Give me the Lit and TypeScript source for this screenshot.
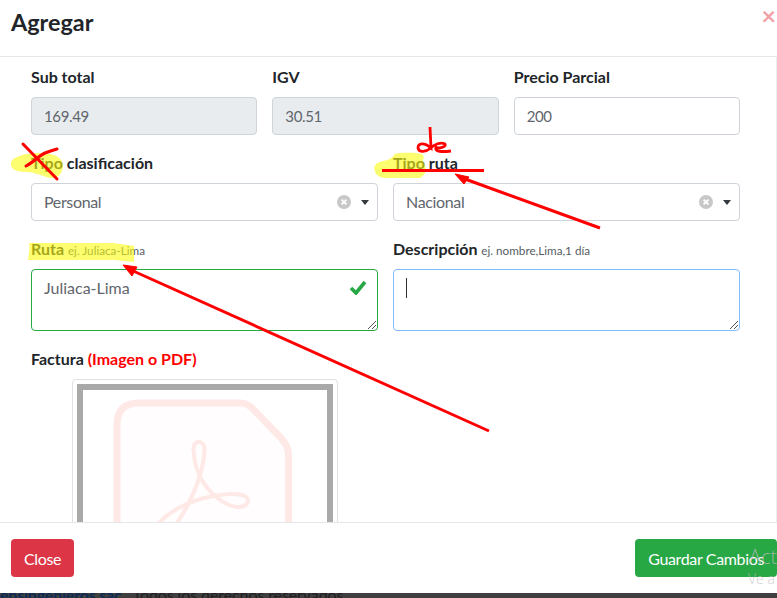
import { LitElement, html, css } from "lit";
import { customElement } from "lit/decorators.js";

@customElement("app-root")
export class AppRoot extends LitElement {
  static styles = css`
    :host { display: block; }
    * { box-sizing: border-box; }
    .page { position: relative; width: 777px; height: 598px; overflow: hidden; background: #3f3f3f; font-family: "Lato", "Noto Sans", sans-serif; font-size: 16px; color: #212529; }
    .modal { height: 593px; background: #fff; display: flex; flex-direction: column; }
    .head { height: 57px; flex: none; border-bottom: 1px solid #e4e7ea; display: flex; justify-content: space-between; padding: 8px 1px 0 11px; }
    .title { font-size: 23.4px; font-weight: 700; line-height: 29px; }
    .x { font-size: 25px; line-height: 14px; font-weight: 700; color: #f1a1a8; }
    .body { flex: 1; overflow: hidden; padding: 8px 36px 0 31px; display: flex; flex-direction: column; border-right: 1px solid #eceef0; }
    .row { display: flex; gap: 15px; margin-bottom: 16px; }
    .col { flex: 1 1 0; min-width: 0; }
    label { display: block; font-weight: 700; line-height: 24px; margin-bottom: 8px; height: 24px; flex: none; }
    small { font-weight: 400; font-size: 11.7px; color: #555c63; }
    .ctl { height: 38px; border: 1px solid #ced4da; border-radius: 4px; padding: 0 12px; display: flex; align-items: center; color: #5f666d; background: #fff; }
    .ctl.dis { background: #e9ecef; }
    .num { font-size: 15px; letter-spacing: -.35px; }
    .sel { justify-content: space-between; padding-right: 8px; letter-spacing: -.35px; }
    .sel > span:first-child { margin-top: -2px; }
    .sel-ic { display: flex; align-items: center; gap: 10px; }
    .clr { width: 14px; height: 14px; display: block; }
    .caret { width: 0; height: 0; border-left: 4px solid transparent; border-right: 4px solid transparent; border-top: 5px solid #343a40; }
    .ta { position: relative; height: 62px; border: 1px solid #ced4da; border-radius: 4px; padding: 6px 12px; color: #5f666d; line-height: 24px; }
    .ta.ok { border-color: #28a745; }
    .ta.focus { border-color: #80bdff; }
    .check { position: absolute; right: 10px; top: 10px; width: 18px; height: 15px; }
    .grip { position: absolute; right: 1px; bottom: 1px; width: 9px; height: 9px; }
    .caretline { width: 1px; height: 20px; background: #333; margin-top: 2px; }
    .red { color: #f00; }
    .thumb { flex: none; width: 266px; height: 300px; margin-left: 41px; border: 1px solid #dee2e6; border-radius: 4px; padding: 4px; }
    .frame { height: 100%; border: 6px solid #a9a9a9; }
    .pdf { display: block; width: 244px; height: 180px; }
    .foot { height: 71px; flex: none; border-top: 1px solid #e4e7ea; display: flex; justify-content: space-between; padding: 16px 0 0 11px; }
    .btn { height: 38px; border-radius: 4px; color: #fff; display: flex; align-items: center; padding: 0 13px; letter-spacing: -.35px; }
    .danger { background: #dc3545; }
    .success { background: #28a745; }
    .strip { position: absolute; left: 0; top: 593px; width: 400px; height: 5px; overflow: hidden; font-size: 16px; line-height: 18px; color: #1f1f1f; white-space: nowrap; }
    .strip span { display: block; margin-top: -7px; letter-spacing: -.1px; }
    .strip b { color: #0d2a55; letter-spacing: -.2px; }
    .ann { position: absolute; inset: 0; width: 777px; height: 598px; pointer-events: none; }
    .hl { fill: #fbfb10; fill-opacity: .6; }
    .wm { position: absolute; color: rgba(190,190,190,.75); font-family: "Open Sans", sans-serif; font-weight: 300; white-space: nowrap; }
    .wm1 { left: 749px; top: 543px; font-size: 20px; line-height: 27px; }
    .wm2 { left: 748px; top: 569px; font-size: 14px; line-height: 19px; }
  `;

  private clear() {
    return html`<svg class="clr" viewBox="0 0 14 14"><circle cx="7" cy="7" r="7" fill="#c8c8c8"/><path d="M4.6 4.6l4.8 4.8M9.4 4.6l-4.8 4.8" stroke="#fff" stroke-width="2"/></svg>`;
  }
  private grip() {
    return html`<svg class="grip" viewBox="0 0 9 9"><path d="M1 9L9 1M5 9l4-4" stroke="#555" stroke-width="1" fill="none"/></svg>`;
  }

  render() {
    return html`<div class="page">
      <div class="modal">
        <div class="head"><div class="title">Agregar</div><div class="x">×</div></div>
        <div class="body">
          <div class="row">
            <div class="col"><label>Sub total</label><div class="ctl dis"><span class="num">169.49</span></div></div>
            <div class="col"><label>IGV</label><div class="ctl dis"><span class="num">30.51</span></div></div>
            <div class="col"><label>Precio Parcial</label><div class="ctl"><span class="num">200</span></div></div>
          </div>
          <div class="row">
            <div class="col"><label>Tipo clasificación</label>
              <div class="ctl sel"><span>Personal</span><span class="sel-ic">${this.clear()}<span class="caret"></span></span></div></div>
            <div class="col"><label>Tipo ruta</label>
              <div class="ctl sel"><span>Nacional</span><span class="sel-ic">${this.clear()}<span class="caret"></span></span></div></div>
          </div>
          <div class="row">
            <div class="col"><label>Ruta <small>ej. Juliaca-Lima</small></label>
              <div class="ta ok">Juliaca-Lima
                <svg class="check" viewBox="0 0 18 15"><path d="M2 8l5 5L16 2" fill="none" stroke="#28a745" stroke-width="3.6"/></svg>
                ${this.grip()}</div></div>
            <div class="col"><label>Descripción <small>ej. nombre,Lima,1 día</small></label>
              <div class="ta focus"><div class="caretline"></div>${this.grip()}</div></div>
          </div>
          <label>Factura <span class="red">(Imagen o PDF)</span></label>
          <div class="thumb"><div class="frame">
            <svg class="pdf" viewBox="83 390 244 180" fill="none" stroke="#ffe9e7">
              <path d="M117 570V425Q117 403 139 403H240Q247 403 252 408L281 438Q288.5 446 288.5 455V570" stroke-width="7" fill="#fffdfd"/>
              <path d="M193.500 450C193 444 196 442 199 442C203 442 205 446 204.500 452C203 470 195 492 185 510C178 522 170 534 160 545" stroke-width="4"/>
              <path d="M193.500 450C194 462 198 474 203 482C212 496 228 508 240 507C248 506 250 500 246 497C240 492 220 494 204 498C186 503 168 512 156 526" stroke-width="4"/>
            </svg>
          </div></div>
        </div>
        <div class="foot"><div class="btn danger">Close</div><div class="btn success">Guardar Cambios</div></div>
      </div>
      <div class="strip"><span><b>ensingenieros.sac</b> . Todos los derechos reservados</span></div>
      <div class="wm wm1">Act</div>
      <div class="wm wm2">Ve a</div>
      <svg class="ann" viewBox="0 0 777 598" fill="none">
        <path class="hl" d="M11 163C12 157 24 153 40 153C56 153 64 159 63 167C62 174 58 178 52 178C44 178 38 172 26 172C16 172 10 169 11 163Z"/>
        <path class="hl" d="M395 154C402 152 416 153 422 154C425 157 423 159 423 161C426 166 428 174 420 178H384C375 177 372 168 376 164C380 160 390 162 395 154Z"/>
        <path class="hl" d="M29 243C30 248 29 254 28 260H115L134 262V246C128 245 120 244 113 243Z"/>
        <path d="M23 144L57 179M26 166C34 162 38 156 45 153C50 151 53 150 57 149" stroke="#f00" stroke-width="3" stroke-linecap="round"/>
        <path d="M382 170.500H484" stroke="#f00" stroke-width="3"/>
        <path d="M430 127L431 148C424 142 418 143 418 148C419 153 426 152 431 148C434 144 441 142 445 144C447 147 438 149 436 147C434 152 442 152 451 151" stroke="#f00" stroke-width="2.800"/>
        <path d="M600 228L465 179" stroke="#f00" stroke-width="3"/>
        <path d="M455 174L469 177L464 184Z" fill="#f00" stroke="#f00"/>
        <path d="M489 431L131 270" stroke="#f00" stroke-width="3"/>
        <path d="M123 265L137 267L132 276Z" fill="#f00" stroke="#f00"/>
      </svg>
    </div>`;
  }
}
